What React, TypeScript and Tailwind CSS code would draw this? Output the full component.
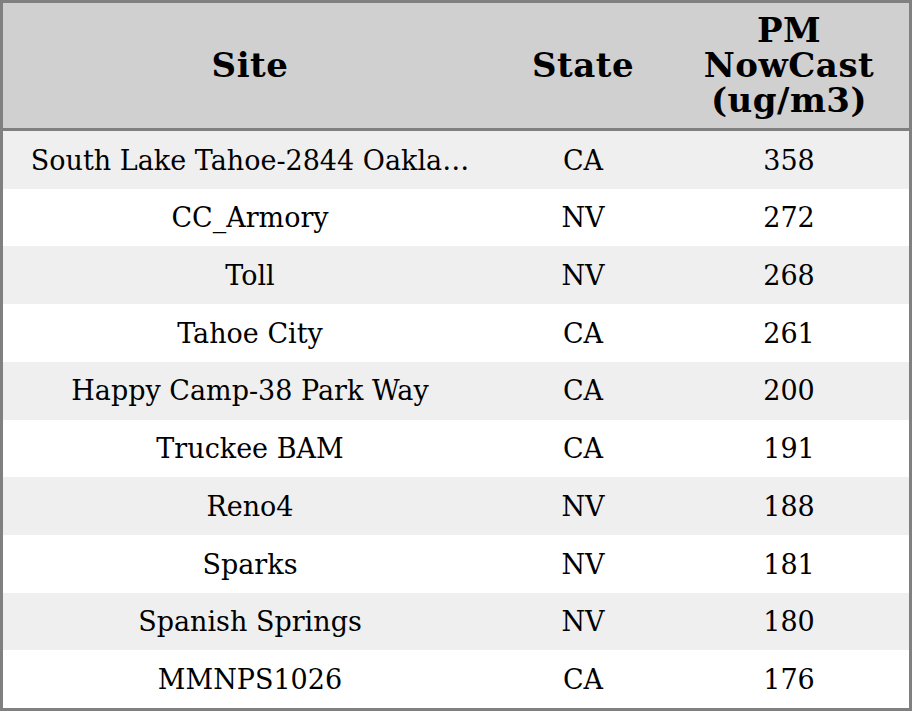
import React from "react";

const rows: [string, string, string][] = [
  ["South Lake Tahoe-2844 Oakla\u2026", "CA", "358"],
  ["CC_Armory", "NV", "272"],
  ["Toll", "NV", "268"],
  ["Tahoe City", "CA", "261"],
  ["Happy Camp-38 Park Way", "CA", "200"],
  ["Truckee BAM", "CA", "191"],
  ["Reno4", "NV", "188"],
  ["Sparks", "NV", "181"],
  ["Spanish Springs", "NV", "180"],
  ["MMNPS1026", "CA", "176"],
];

export default function App() {
  return (
    <div
      className="w-[912px] h-[711px] border-[3px] border-[#808080] bg-white text-black flex flex-col"
      style={{ fontFamily: '"DejaVu Serif", serif' }}
    >
      <div className="grid grid-cols-[494px_172px_240px] h-[125px] bg-[#d0d0d0] border-b-[3px] border-[#808080] box-content font-bold text-[34px] leading-[35px] tracking-[0.5px]">
        <div className="flex items-center justify-center">Site</div>
        <div className="flex items-center justify-center">State</div>
        <div className="flex items-center justify-center text-center">
          PM
          <br />
          NowCast
          <br />
          (ug/m3)
        </div>
      </div>
      <div className="flex flex-col flex-1">
        {rows.map((r, i) => (
          <div
            key={i}
            className={
              "grid grid-cols-[494px_172px_240px] flex-1 items-center text-[27px] pt-[2px] " +
              (i % 2 === 0 ? "bg-[#efefef]" : "bg-white")
            }
          >
            <div className="text-center whitespace-nowrap overflow-hidden">{r[0]}</div>
            <div className="text-center">{r[1]}</div>
            <div className="text-center">{r[2]}</div>
          </div>
        ))}
      </div>
    </div>
  );
}
